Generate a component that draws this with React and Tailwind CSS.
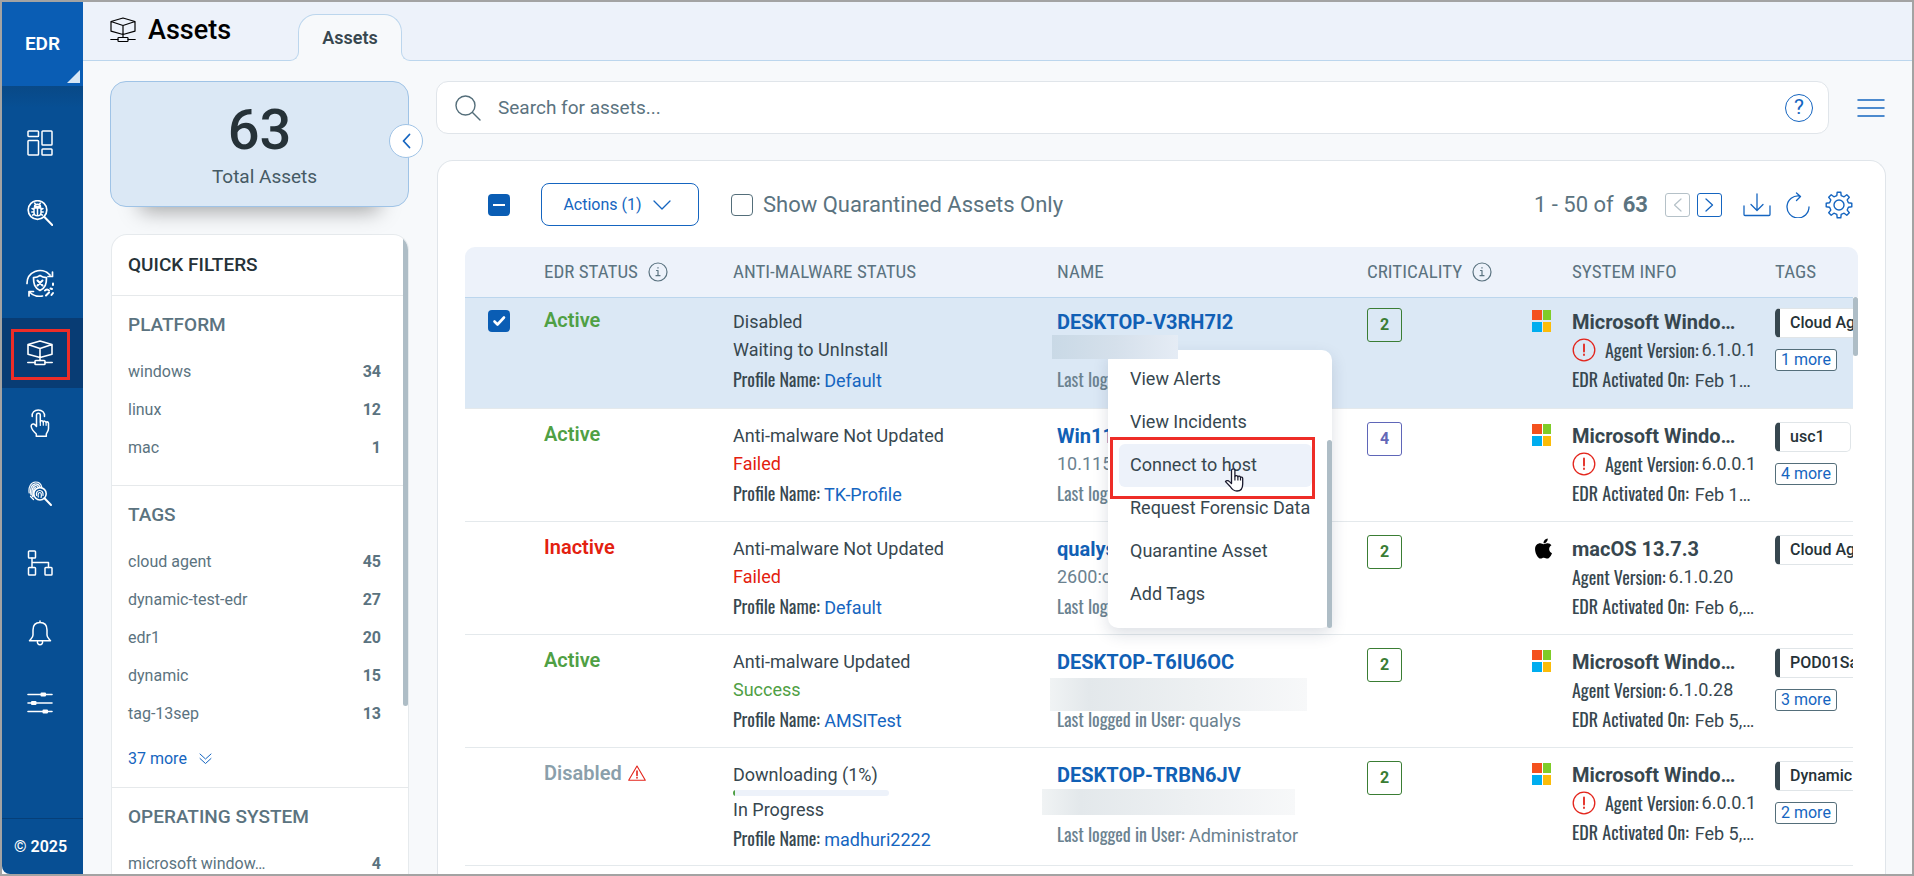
import clsx from "clsx";
import { FaApple } from "react-icons/fa";

const FONT = "font-['Roboto','Noto_Sans',sans-serif]";
const NARROW = "font-['Oswald','Liberation_Sans_Narrow','Roboto',sans-serif]";
const CONDENSED = "font-['Roboto_Condensed','Liberation_Sans_Narrow','Roboto',sans-serif]";

function Svg({ size = 26, w, h, children, sw = 1.5, className }) {
  return (
    <svg
      width={w || size}
      height={h || size}
      viewBox={`0 0 ${w || size} ${h || size}`}
      fill="none"
      stroke="currentColor"
      strokeWidth={sw}
      strokeLinejoin="round"
      strokeLinecap="round"
      className={clsx("shrink-0", className)}
      aria-hidden="true"
    >
      {children}
    </svg>
  );
}

const AssetIcon = ({ sw = 1.6 }) => (
  <Svg sw={sw}>
    <path d="M13 1 25 4.500v9.700L13 17.500 1 14.200V4.500zM1 4.500l12 4 12-4M13 8.500v9M13 17.500v3" />
    <rect x="8" y="20.500" width="10" height="4" rx="0.8" />
    <path d="M.8 22.500H8M18 22.500h7.200" />
  </Svg>
);

const DashboardIcon = () => (
  <Svg>
    <rect x="1" y="1" width="10.500" height="5.500" rx="0.8" />
    <rect x="15" y="1" width="10" height="14" rx="0.8" />
    <rect x="1" y="10.500" width="10.500" height="14.500" rx="0.8" />
    <rect x="15" y="19" width="10" height="6" rx="0.8" />
  </Svg>
);

const BugSearchIcon = () => (
  <Svg sw={1.700}>
    <circle cx="10.500" cy="10" r="9.300" />
    <path d="m17.200 16.800 8 8.200" strokeWidth="2" />
    <path d="M7.500 6.500c0-1.500 1.300-2.300 3-2.300s3 .8 3 2.300zM7 8h7v4.500c0 2-1.500 3.300-3.500 3.300S7 14.500 7 12.500zM10.500 8v7.500M7 9.500 5 8.500M7 12H4.800M7.400 14l-1.900 1.200M14 9.500l2-1M14 12h2.200M13.600 14l1.900 1.200M8.500 4.300 7.600 3M12.500 4.300l.9-1.300" strokeWidth="1.500" />
  </Svg>
);

const ShieldCycleIcon = () => (
  <Svg size={28} sw={1.700}>
    <path d="M1 14.500A13 13 0 0 1 9 2.500c5-2 11-1 15 3.500M26.500 3v4.500H22" />
    <path d="M3 27v-4.500h4.500M3.500 23c3.500 4 8 5 13 4" />
    <path d="M14 6.500c2 1.500 4 2 6.500 2.200 0 6-1 10-6.500 12.800C8.500 18.700 7.500 14.700 7.500 8.700 10 8.500 12 8 14 6.500z" />
    <path d="m11.500 11.500 5 5M16.500 11.500l-5 5" strokeWidth="2" />
    <path d="M19 21.500c1-1.500 3-1.500 4 0M20 26.500l3-3M25.500 26l1.500-2M24.500 19.500l1.500.5M27 14.500v1.500" strokeWidth="2" />
  </Svg>
);

const TouchIcon = () => (
  <Svg w={20} h={28}>
    <path d="M6.500 17.500V6.200a1.900 1.900 0 0 1 3.800 0V13c0-1.800 3-1.800 3 .2 0-1.500 2.800-1.500 2.800.4 0-1.200 2.400-1 2.400.6v5.300c0 2.500-1.500 3.500-2.200 5.500v2.300H6.300v-2.300C3.500 22.500 1.500 20 1.200 17.500c-.2-1.700 1-3 2.600-2.500 1.300.4 2 1.500 2.700 2.500z" />
    <path d="M10.300 13v3.500M13.300 13.200v3M16.100 13.600v2.700" strokeWidth="1.200" />
    <path d="M2.200 7.500C1.600 3.500 4.500 1 8.300 1s6.700 2.500 6.200 6.500" />
  </Svg>
);

const FingerprintIcon = () => (
  <Svg w={24} h={25} sw={1.200}>
    <path d="M1.200 12C.2 6 3 1 7.500 1c3.200 0 5.500 1.800 6.200 5M3 14C1.700 7.500 3.800 2.800 7.600 2.800c2.300 0 3.700 1.200 4.300 3M4.500 15.500C3.300 9 4.800 4.700 7.600 4.700c1.300 0 2.200.6 2.600 1.500M6 16C5 11 5.600 6.700 7.600 6.700M2.500 15.500l3 3" />
    <circle cx="12" cy="12.800" r="6.200" strokeWidth="1.600" fill="#074f94" />
    <path d="M8.500 14.500c-.6-3 .8-5 3.200-5s3.700 2 3.300 5M10.300 16c-.5-2.700 0-4.500 1.500-4.500s1.900 1.800 1.300 5" />
    <path d="m16.500 17.300 6.500 6.700" strokeWidth="2" />
  </Svg>
);

const TreeIcon = () => (
  <Svg>
    <rect x="1.500" y="1" width="7" height="7" rx="0.8" />
    <rect x="1.500" y="17.500" width="7" height="7.500" rx="0.8" />
    <rect x="18" y="17.500" width="7" height="7.500" rx="0.8" />
    <path d="M5 8v9.500M5 12.500h16.500v5" />
  </Svg>
);

const BellIcon = () => (
  <Svg w={24} h={26}>
    <path d="M12 1v1.500M12 2.500c-4.500 0-7 3-7 7.500v5c0 2.500-1.500 3.500-3.500 5.800h21C20.500 18.500 19 17.500 19 15v-5c0-4.500-2.500-7.500-7-7.500z" />
    <path d="M9.500 21.500a2.600 2.600 0 1 0 5 0" />
  </Svg>
);

const SlidersIcon = () => (
  <Svg w={26} h={22} sw={1.600}>
    <path d="M1 2.500h24M1 11h24M1 19.500h24" />
    <path d="M14.500 1.500h3.500v2h-3.500zM5 10h3.500v2H5zM16.500 18.500H20v2h-3.500z" fill="currentColor" strokeWidth="2" />
  </Svg>
);

const InfoIcon = () => (
  <Svg size={20} sw={1.200}>
    <circle cx="10" cy="10" r="9" />
    <path d="M8.500 8.500H10v5M8 13.700h4M10 5.500v.6" />
  </Svg>
);

const WarnCircle = () => (
  <Svg size={24} sw={1.300} className="text-[#e3241b]">
    <circle cx="12" cy="12" r="10.800" />
    <path d="M12 6.500v7M12 16.500v.5" strokeWidth="1.800" />
  </Svg>
);

const WarnTriangle = () => (
  <Svg w={18} h={16} sw={1.100} className="text-[#e3241b]">
    <path d="M9 1 17.300 15.300H.7z" />
    <path d="M9 6v4.500M9 12.500v.5" strokeWidth="1.600" />
  </Svg>
);

const WindowsIcon = () => (
  <svg width="20" height="22" viewBox="0 0 20 22" aria-hidden="true">
    <path fill="#f4511e" d="M0 0h10v10H0z" />
    <path fill="#7fcc28" d="M11 0h8v10h-8z" />
    <path fill="#00adef" d="M0 12h10v10H0z" />
    <path fill="#fbbc09" d="M11 12h8v10h-8z" />
  </svg>
);

const HandCursor = () => (
  <svg width="20" height="26" viewBox="0 0 20 26" className="absolute left-[105px] top-[23px]" aria-hidden="true">
    <path
      d="M7.500 16.500V3a1.800 1.800 0 0 1 3.400 0v6.500c.3-1.200 2.600-1.200 3 .3.500-1 2.300-.8 2.600.6.600-.7 2.200-.3 2.200 1.200V17c0 4-2 7-5.700 7-3.500 0-5-1.500-6.800-4.500L1.500 14.600c.8-1.500 3-1 4 0z"
      fill="#fff"
      stroke="#1a1a2e"
      strokeWidth="1.300"
      strokeLinejoin="round"
    />
    <path d="M10.900 9.500v4M13.900 10v3.500M16.500 10.500v3" stroke="#1a1a2e" strokeWidth="1.200" />
  </svg>
);

const navItems = [
  { label: "Dashboard", icon: <DashboardIcon /> },
  { label: "Hunting", icon: <BugSearchIcon /> },
  { label: "Response", icon: <ShieldCycleIcon /> },
  { label: "Assets", icon: <AssetIcon />, active: true },
  { label: "Actions", icon: <TouchIcon /> },
  { label: "Forensics", icon: <FingerprintIcon /> },
  { label: "Policies", icon: <TreeIcon /> },
  { label: "Alerts", icon: <BellIcon /> },
  { label: "Configuration", icon: <SlidersIcon /> },
];

const filters = [
  { title: "PLATFORM", items: [["windows", 34], ["linux", 12], ["mac", 1]] },
  {
    title: "TAGS",
    items: [["cloud agent", 45], ["dynamic-test-edr", 27], ["edr1", 20], ["dynamic", 15], ["tag-13sep", 13]],
    more: "37 more",
  },
  { title: "OPERATING SYSTEM", items: [["microsoft window…", 4]] },
];

const rows = [
  {
    status: "Active", scan: "Disabled", result: "Waiting to UnInstall", profile: "Default",
    name: "DESKTOP-V3RH7I2", crit: 2, os: "Microsoft Windo…",
    warn: true, version: "6.1.0.1", date: "Feb 1…", tag: "Cloud Agent", more: "1 more", selected: true,
  },
  {
    status: "Active", scan: "Anti-malware Not Updated", result: "Failed", profile: "TK-Profile",
    name: "Win11", ip: "10.115", crit: 4, os: "Microsoft Windo…",
    warn: true, version: "6.0.0.1", date: "Feb 1…", tag: "usc1", more: "4 more",
  },
  {
    status: "Inactive", scan: "Anti-malware Not Updated", result: "Failed", profile: "Default",
    name: "qualys", ip: "2600:c", crit: 2, os: "macOS 13.7.3", mac: true,
    version: "6.1.0.20", date: "Feb 6,…", tag: "Cloud Agent",
  },
  {
    status: "Active", scan: "Anti-malware Updated", result: "Success", profile: "AMSITest",
    name: "DESKTOP-T6IU6OC", user: "qualys", crit: 2, os: "Microsoft Windo…",
    version: "6.1.0.28", date: "Feb 5,…", tag: "POD01Sanity", more: "3 more",
    redact: "-left-[7px] top-[43px] h-[33px] w-[257px]",
  },
  {
    status: "Disabled", scan: "Downloading (1%)", progress: 1, result: "In Progress", profile: "madhuri2222",
    name: "DESKTOP-TRBN6JV", user: "Administrator", crit: 2, os: "Microsoft Windo…",
    warn: true, version: "6.0.0.1", date: "Feb 5,…", tag: "Dynamic", more: "2 more",
    redact: "-left-[15px] top-[41px] h-[26px] w-[253px]",
  },
];

const statusColor = { Active: "text-[#4fa044]", Inactive: "text-[#e3200f]", Disabled: "text-[#8a9fab]" };
const resultColor = { Failed: "text-[#e3200f]", Success: "text-[#4fa044]" };

const menuItems = ["View Alerts", "View Incidents", "Connect to host", "Request Forensic Data", "Quarantine Asset", "Add Tags"];

function Sidebar() {
  return (
    <aside className="w-[81px] shrink-0 flex flex-col bg-[#074f94] text-white rounded-bl-lg overflow-hidden">
      <button className="relative h-[84px] shrink-0 bg-[#0a5db4] text-[19px] font-semibold">
        EDR
        <svg width="13" height="13" viewBox="0 0 13 13" className="absolute right-[3px] bottom-[3px]" aria-hidden="true">
          <path d="M13 0v13H0z" fill="#d7e6f5" />
        </svg>
      </button>
      <div className="h-[22px] shrink-0 bg-linear-to-b from-[#094987] to-[#074f94]" />
      <nav className="flex-1 flex flex-col">
        {navItems.map((item) => (
          <a
            key={item.label}
            href="#"
            aria-label={item.label}
            className={clsx("relative h-[70px] flex items-center justify-center pr-[6px]", item.active && "bg-[#083c74]")}
          >
            {item.icon}
            {item.active && <span className="absolute left-[9px] top-[11px] h-[51px] w-[59px] border-3 border-[#ee2d27]" />}
          </a>
        ))}
      </nav>
      <div className="h-14 shrink-0 flex items-center justify-center pr-1 border-t border-[#063f78] text-base font-semibold">© 2025</div>
    </aside>
  );
}

function Header() {
  return (
    <header className="h-[59px] shrink-0 flex items-start bg-[#edf2fa] border-b border-[#bcd6ed] pl-[27px]">
      <div className="flex items-center gap-3 h-14 text-black">
        <AssetIcon sw={1.200} />
        <h1 className="text-[27px] font-medium">Assets</h1>
      </div>
      <a href="#" className="relative ml-[67px] mt-3 h-[47px] w-[104px] flex items-center justify-center bg-[#f7f9fb] border border-b-0 border-[#bcd6ed] rounded-t-[18px] text-lg font-semibold text-[#37474f]">
        Assets
        <span className="absolute -left-[9px] bottom-0 size-[9px] bg-[#f7f9fb]">
          <span className="block size-[9px] rounded-br-[9px] border-b border-r border-[#bcd6ed] bg-[#edf2fa]" />
        </span>
        <span className="absolute -right-[9px] bottom-0 size-[9px] bg-[#f7f9fb]">
          <span className="block size-[9px] rounded-bl-[9px] border-b border-l border-[#bcd6ed] bg-[#edf2fa]" />
        </span>
      </a>
    </header>
  );
}

function QuickFilters() {
  return (
    <section className="relative flex-1 min-h-0 ml-px overflow-hidden rounded-t-2xl border border-b-0 border-[#e6eaed] bg-white">
      <h2 className="h-[61px] flex items-center pl-4 border-b border-[#e6e9eb] text-[19px] font-medium text-[#263238]">QUICK FILTERS</h2>
      {filters.map((group) => (
        <div key={group.title} className="pl-4 pr-[27px] pt-[17px] pb-[18px] border-b border-[#e6e9eb] text-[#5b7380]">
          <h3 className="h-6 leading-6 mb-4 text-[19px] font-medium">{group.title}</h3>
          {group.items.map(([label, count]) => (
            <a key={label} href="#" className="flex h-[38px] items-center justify-between text-base">
              <span>{label}</span>
              <span className="font-bold">{count}</span>
            </a>
          ))}
          {group.more && (
            <button className="mt-4 flex h-5 items-center gap-3 text-base text-[#1565c0]">
              {group.more}
              <Svg w={13} h={12} sw={1}>
                <path d="m1 1 5.500 5L12 1M1 5.500l5.500 5 5.500-5" />
              </Svg>
            </button>
          )}
        </div>
      ))}
      <div className="absolute right-0 top-0 h-[471px] w-[5px] rounded-full bg-[#aebdc6]" />
    </section>
  );
}

function LeftColumn() {
  return (
    <div className="w-[299px] shrink-0 flex flex-col">
      <div className="relative z-10 h-[126px] shrink-0 mb-[27px] flex flex-col items-center rounded-2xl border border-[#9fc3e6] bg-[#dbe8f5] shadow-[0_34px_20px_-30px_rgba(0,0,0,0.35)]">
        <div className="mt-[18px] h-[60px] leading-[60px] text-[56px] font-medium text-[#263238]">63</div>
        <div className="mt-[5px] pl-[10px] leading-6 text-[19px] text-[#455a64]">Total Assets</div>
        <button aria-label="Collapse filters" className="absolute -right-[15px] top-[42px] size-[34px] rounded-full border border-[#9fc3e6] bg-white flex items-center justify-center text-[#1565c0]">
          <Svg w={9} h={16} sw={1.800}>
            <path d="M7.500 1.500 1.500 8l6 6.500" />
          </Svg>
        </button>
      </div>
      <QuickFilters />
    </div>
  );
}

function SearchBar() {
  return (
    <div className="flex items-center gap-7 pr-[1px]">
      <div className="flex-1 h-[53px] flex items-center gap-[17px] pl-[18px] pr-[15px] rounded-xl border border-[#e0e5ea] bg-white">
        <Svg sw={1.400} className="text-[#546e7a]">
          <circle cx="10.500" cy="10.500" r="9.500" />
          <path d="m17.500 17.500 7.500 7.500" />
        </Svg>
        <input aria-label="Search for assets" placeholder="Search for assets..." className="flex-1 h-8 bg-transparent outline-none text-[19px] placeholder:text-[#5b7380]" />
        <button aria-label="Help" className="flex size-7 items-center justify-center rounded-full border border-[#1565c0] text-[21px] leading-none text-[#1565c0]">?</button>
      </div>
      <button aria-label="Menu" className="text-[#1565c0]">
        <Svg w={28} h={20} sw={1.500}>
          <path d="M1 2h26M1 10h26M1 18h26" />
        </Svg>
      </button>
    </div>
  );
}

const IconButton = ({ label, children, className }) => (
  <button aria-label={label} className={clsx("flex items-center justify-center text-[#1565c0]", className)}>{children}</button>
);

function Toolbar() {
  return (
    <div className="h-[43px] flex items-center pl-[23px] pr-[5px]">
      <span className="relative size-[22px]">
        <input type="checkbox" defaultChecked aria-label="Select all" className="block size-[22px] appearance-none rounded bg-[#0a5db4]" />
        <span className="pointer-events-none absolute left-[5px] top-[10px] h-[2px] w-3 bg-white" />
      </span>
      <button className="ml-[31px] h-[43px] w-[158px] flex items-center justify-center gap-[11px] pr-[6px] rounded-lg border border-[#1565c0] text-base text-[#1565c0]">
        Actions (1)
        <Svg w={18} h={10} sw={1.300}>
          <path d="m1 1 8 8 8-8" />
        </Svg>
      </button>
      <label className="ml-8 flex items-center gap-[10px] text-[22px] text-[#5b7380]">
        <input type="checkbox" className="size-[22px] appearance-none rounded border border-[#546e7a] bg-white" />
        Show Quarantined Assets Only
      </label>
      <div className="ml-auto flex items-center text-[#5b7380]">
        <span className="text-[22px]">1 - 50 of</span>
        <span className="ml-[9px] text-[22px] font-bold">63</span>
        <button aria-label="Previous page" disabled className="ml-[17px] flex h-6 w-[25px] items-center justify-center rounded-[3px] border border-[#b5c1c8] text-[#b5c1c8]">
          <Svg w={9} h={14} sw={1.200}><path d="M8 1 1.500 7 8 13" /></Svg>
        </button>
        <button aria-label="Next page" className="ml-[7px] flex h-6 w-[25px] items-center justify-center rounded-[3px] border border-[#1565c0] text-[#1565c0]">
          <Svg w={9} h={14} sw={1.300}><path d="m1 1 6.500 6L1 13" /></Svg>
        </button>
        <IconButton label="Download" className="ml-[21px]">
          <Svg w={28} h={24} sw={1.300}>
            <path d="M14 1v16M8 11.500l6 6 6-6M1 13v8.500a1 1 0 0 0 1 1h24a1 1 0 0 0 1-1V13" />
          </Svg>
        </IconButton>
        <IconButton label="Refresh" className="ml-[15px]">
          <Svg w={24} h={26} sw={1.300}>
            <path d="M13.500 4A11 11 0 1 0 23 15M10.500 1l4 3.500-4 4" />
          </Svg>
        </IconButton>
        <IconButton label="Settings" className="ml-[15px]">
          <Svg size={28} sw={1.400}>
            <circle cx="14" cy="14" r="5" />
            <path d="M11.800 4.600 12.200 1.200h3.600l.4 3.400 2.900 1.200 2.700-2.100 2.500 2.500-2.100 2.700 1.200 2.900 3.400.4v3.600l-3.400.4-1.200 2.900 2.100 2.700-2.500 2.500-2.700-2.100-2.900 1.200-.4 3.400h-3.600l-.4-3.400-2.900-1.200-2.700 2.100-2.500-2.500 2.100-2.700-1.200-2.900-3.400-.4v-3.600l3.400-.4 1.200-2.900-2.100-2.700 2.500-2.500 2.700 2.100z" />
          </Svg>
        </IconButton>
      </div>
    </div>
  );
}

function ContextMenu() {
  return (
    <div className="absolute left-[51px] top-[52px] z-20 w-[224px] rounded-[10px] bg-white pt-2 pb-[12px] shadow-[0_6px_16px_rgba(30,50,80,0.15)]">
      {menuItems.map((item, i) => (
        <div key={item} className="relative pl-[11px] pr-5">
          <button
            className={clsx(
              "block h-[43px] w-full rounded-md pl-[11px] text-left text-lg whitespace-nowrap text-[#37474f]",
              i === 2 && "bg-[#edf2fa]"
            )}
          >
            {item}
          </button>
          {i === 2 && (
            <>
              <span className="pointer-events-none absolute left-[2px] -top-[7px] z-10 h-[62px] w-[205px] border-3 border-[#ee2d27]" />
              <span className="pointer-events-none absolute left-[11px] top-0 z-10"><HandCursor /></span>
            </>
          )}
        </div>
      ))}
      <div className="absolute right-0 bottom-0 h-[188px] w-[5px] rounded-full bg-[#aebdc6]" />
    </div>
  );
}

function AssetRow({ row }) {
  const pad = row.selected ? "pt-[10px]" : "pt-[13px]";
  return (
    <tr
      className={clsx(
        "border-b border-[#e4e9ec] align-top text-lg leading-7",
        row.selected ? "h-[111px] bg-[#dbe8f5]" : row.progress ? "h-[118px]" : "h-[113px]"
      )}
    >
      <td className={clsx("pl-[23px]", pad)}>
        {row.selected && (
          <span className="relative mt-[2px] block size-[22px]">
            <input type="checkbox" defaultChecked aria-label={`Select ${row.name}`} className="block size-[22px] appearance-none rounded bg-[#0a5db4]" />
            <Svg w={22} h={22} sw={2.600} className="pointer-events-none absolute inset-0 text-white">
              <path d="m6.500 11.500 3 3 6.500-7" />
            </Svg>
          </span>
        )}
      </td>
      <td className={row.selected ? "pt-[8px]" : "pt-[11px]"}>
        <span className={clsx("inline-flex items-center gap-[6px] text-xl leading-7 font-semibold", statusColor[row.status])}>
          {row.status}
          {row.status === "Disabled" && <WarnTriangle />}
        </span>
      </td>
      <td className={clsx("text-[#37474f]", pad)}>
        <div>{row.scan}</div>
        {row.progress && (
          <div className="mt-px h-[6px] w-[156px] overflow-hidden rounded-full bg-[#edf2fa]">
            <div className="h-full bg-[#4fa044]" style={{ width: `${row.progress}%` }} />
          </div>
        )}
        <div className={resultColor[row.result]}>{row.result}</div>
        <div className={clsx(!row.progress && "mt-px")}>
          <span className={NARROW}>Profile Name:</span>{" "}
          <a href="#" className="text-[#1565c0]">{row.profile}</a>
        </div>
      </td>
      <td className={clsx("relative text-[#6b8290]", pad)}>
        <a href="#" className="block text-xl leading-7 font-bold text-[#1160b5]">{row.name}</a>
        <div className="h-7">{row.ip}</div>
        <div className={row.progress ? "mt-[3px]" : "mt-px"}>
          <span className={NARROW}>{row.user ? "Last logged in User:" : "Last logg"}</span> {row.user}
        </div>
        {row.redact && <div className={clsx("absolute bg-linear-to-r from-[#f0f3f4] from-0% via-[#e3e8eb] via-15% to-[#f7f8f9]", row.redact)} />}
        {row.selected && <ContextMenu />}
        {row.selected && <div className="absolute -left-[5px] top-[37px] z-30 h-6 w-[126px] bg-linear-to-r from-[#c9d9e6] via-[#d5e0eb] to-[#e5ecf5]" />}
      </td>
      <td className={pad}>
        <span
          className={clsx(
            "flex h-[34px] w-[35px] items-center justify-center rounded-[3px] border text-base font-bold",
            row.crit === 4 ? "border-[#5f66b8] text-[#6468b8]" : "border-[#3a7d34] text-[#3a7d34]"
          )}
        >
          {row.crit}
        </span>
      </td>
      <td className={clsx("text-black", pad)}>
        <div className="pt-[2px]">{row.mac ? <FaApple size={23} /> : <WindowsIcon />}</div>
      </td>
      <td className={clsx("whitespace-nowrap text-[#37474f]", pad)}>
        <div className="text-xl leading-7 font-bold">{row.os}</div>
        <div className="flex items-center">
          {row.warn && <span className="mr-[9px]"><WarnCircle /></span>}
          <span className={clsx(NARROW, "mr-[3px]")}>Agent Version:</span>
          {row.version}
        </div>
        <div className="mt-px">
          <span className={clsx(NARROW, "mr-[6px]")}>EDR Activated On:</span>
          {row.date}
        </div>
      </td>
      <td className={clsx("overflow-hidden whitespace-nowrap", pad)}>
        <span className="inline-flex h-[30px] min-w-[76px] items-center rounded-[5px] border border-l-5 border-[#e0e5e8] border-l-[#37474f] bg-white pl-[10px] pr-3 text-base font-medium text-[#263238]">
          {row.tag}
        </span>
        {row.more && (
          <button className="mt-[11px] block h-[22px] rounded-[3px] border border-[#546e7a] bg-white px-[5px] text-base leading-5 text-[#1565c0]">
            {row.more}
          </button>
        )}
      </td>
    </tr>
  );
}

function AssetTable() {
  return (
    <div className="relative mt-[21px] overflow-hidden rounded-t-[10px]">
      <table className="w-full table-fixed border-collapse text-left">
        <colgroup>
          <col className="w-[79px]" />
          <col className="w-[189px]" />
          <col className="w-[324px]" />
          <col />
          <col className="w-[165px]" />
          <col className="w-[40px]" />
          <col className="w-[203px]" />
          <col className="w-[83px]" />
        </colgroup>
        <thead className={clsx("bg-[#edf2fa] text-[19px] text-[#5b7380]", CONDENSED)}>
          <tr className="h-[50px] border-b border-[#bcd6ed] [&>th]:font-normal">
            <th />
            <th><span className="flex items-center gap-[10px]">EDR STATUS <InfoIcon /></span></th>
            <th>ANTI-MALWARE STATUS</th>
            <th>NAME</th>
            <th><span className="flex items-center gap-[10px]">CRITICALITY <InfoIcon /></span></th>
            <th />
            <th>SYSTEM INFO</th>
            <th>TAGS</th>
          </tr>
        </thead>
        <tbody>
          {rows.map((row) => (
            <AssetRow key={row.name} row={row} />
          ))}
        </tbody>
      </table>
      <div className="absolute right-0 top-[50px] bottom-0 w-[5px] bg-white">
        <div className="h-[59px] rounded-full bg-[#aebdc6]" />
      </div>
    </div>
  );
}

export default function App() {
  return (
    <div className={clsx("flex h-screen overflow-hidden border-2 border-[#a3a3a3] bg-[#f7f9fb] antialiased", FONT)}>
      <Sidebar />
      <div className="flex min-w-0 flex-1 flex-col">
        <Header />
        <div className="flex min-h-0 flex-1 gap-[27px] pl-[27px] pr-[26px] pt-5">
          <LeftColumn />
          <main className="flex min-w-0 flex-1 flex-col">
            <SearchBar />
            <section className="mt-[26px] ml-px min-h-0 flex-1 overflow-hidden rounded-t-2xl border border-b-0 border-[#e0e5ea] bg-white pl-[27px] pr-[27px] pt-[22px]">
              <Toolbar />
              <AssetTable />
            </section>
          </main>
        </div>
      </div>
    </div>
  );
}
